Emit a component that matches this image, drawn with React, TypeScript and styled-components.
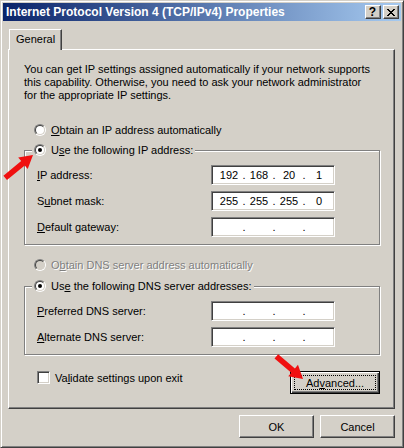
import React from "react";
import styled, { createGlobalStyle, css } from "styled-components";

const GlobalStyle = createGlobalStyle`
  html, body {
    margin: 0;
    padding: 0;
    background: #d4d0c8;
  }
  body {
    font-family: "Liberation Sans", Arial, sans-serif;
    font-size: 11px;
    color: #000;
  }
`;

const Screen = styled.div`
  position: relative;
  width: 404px;
  height: 448px;
`;

const Window = styled.div`
  width: 404px;
  height: 448px;
  box-sizing: border-box;
  border: 1px solid;
  border-color: #d4d0c8 #404040 #404040 #d4d0c8;
  box-shadow: inset 1px 1px 0 #fff, inset -1px -1px 0 #808080;
  padding: 2px;
  background: #d4d0c8;
  display: flex;
  flex-direction: column;
`;

const TitleBar = styled.div`
  height: 18px;
  flex: none;
  display: flex;
  align-items: center;
  padding: 0 2px 0 3px;
  background: linear-gradient(90deg, #0a246a 0%, #a6caf0 100%);
`;

const Title = styled.div`
  flex: 1;
  color: #fff;
  font-weight: bold;
  font-size: 12px;
  white-space: nowrap;
`;

const CaptionButtons = styled.div`
  display: flex;
  gap: 2px;
`;

const CaptionButton = styled.div`
  width: 16px;
  height: 14px;
  box-sizing: border-box;
  background: #d4d0c8;
  border: 1px solid;
  border-color: #fff #404040 #404040 #fff;
  box-shadow: inset -1px -1px 0 #808080;
  display: flex;
  align-items: center;
  justify-content: center;
`;

const HelpGlyph = styled.span`
  font-weight: bold;
  font-size: 12px;
  line-height: 12px;
  margin: 0 1px 1px 0;
`;

const Body = styled.div`
  flex: 1;
  display: flex;
  flex-direction: column;
  padding: 8px 6px 0 5px;
`;

const TabStrip = styled.div`
  display: flex;
  padding-left: 1px;
`;

const Tab = styled.div`
  position: relative;
  z-index: 1;
  width: 53px;
  height: 21px;
  margin-bottom: -1px;
  box-sizing: border-box;
  padding-left: 6px;
  line-height: 18px;
  background: #d4d0c8;
  border-top: 1px solid #fff;
  border-left: 1px solid #fff;
  border-right: 1px solid #404040;
  box-shadow: inset -1px 0 0 #808080;
`;

const Panel = styled.div`
  height: 360px;
  box-sizing: border-box;
  border: 1px solid;
  border-color: #fff #404040 #404040 #fff;
  box-shadow: inset -1px -1px 0 #808080;
  padding: 13px 14px 0 15px;
  display: flex;
  flex-direction: column;
`;

const Intro = styled.p`
  margin: 0;
  line-height: 13px;
  white-space: nowrap;
`;

const Key = styled.span`
  text-decoration: underline;
  text-underline-offset: 1px;
`;

const OptionRow = styled.div<{ $mt: number; $disabled?: boolean }>`
  display: flex;
  align-items: center;
  gap: 5px;
  height: 16px;
  margin-top: ${(p) => p.$mt}px;
  padding-left: 10px;
  ${(p) =>
    p.$disabled &&
    css`
      color: #808080;
      text-shadow: 1px 1px 0 #fff;
    `}
`;

const RadioOuter = styled.span`
  flex: none;
  width: 12px;
  height: 12px;
  box-sizing: border-box;
  border-radius: 50%;
  border: 1px solid;
  border-color: #808080 #fff #fff #808080;
  display: flex;
`;

const RadioInner = styled.span<{ $disabled?: boolean }>`
  flex: 1;
  border-radius: 50%;
  border: 1px solid;
  border-color: #404040 #d4d0c8 #d4d0c8 #404040;
  background: ${(p) => (p.$disabled ? "#d4d0c8" : "#fff")};
  display: flex;
  align-items: center;
  justify-content: center;
`;

const RadioDot = styled.span`
  width: 4px;
  height: 4px;
  border-radius: 50%;
  background: #000;
`;

const Radio = ({ checked, disabled }: { checked?: boolean; disabled?: boolean }) => (
  <RadioOuter>
    <RadioInner $disabled={disabled}>{checked && <RadioDot />}</RadioInner>
  </RadioOuter>
);

const GroupBox = styled.div<{ $mt: number }>`
  margin-top: ${(p) => p.$mt}px;
  width: 356px;
  box-sizing: border-box;
  border: 1px solid #808080;
  box-shadow: inset 1px 1px 0 #fff, 1px 1px 0 #fff;
  padding-bottom: 7px;
  display: flex;
  flex-direction: column;
`;

const Legend = styled.div`
  align-self: flex-start;
  display: flex;
  align-items: center;
  gap: 5px;
  height: 16px;
  margin: -9px 0 7px 7px;
  padding: 0 2px;
  background: #d4d0c8;
`;

const FieldRow = styled.div`
  display: flex;
  align-items: center;
  height: 20px;
  padding-left: 12px;

  & + & {
    margin-top: 6px;
  }
`;

const FieldLabel = styled.div`
  width: 174px;
`;

const IpBox = styled.div`
  width: 124px;
  height: 20px;
  box-sizing: border-box;
  border: 1px solid;
  border-color: #808080 #fff #fff #808080;
  box-shadow: inset 1px 1px 0 #404040, inset -1px -1px 0 #d4d0c8;
  background: #fff;
  padding-left: 4px;
  display: grid;
  grid-template-columns: 26px 4px 26px 4px 26px 4px 26px;
  align-items: center;
`;

const Octet = styled.span`
  text-align: center;
`;

const Dot = styled.span`
  display: flex;
  justify-content: center;
`;

const IpField = ({ value }: { value?: string[] }) => {
  const parts = value ?? ["", "", "", ""];
  return (
    <IpBox>
      {parts.map((v, i) => (
        <React.Fragment key={i}>
          {i > 0 && <Dot>.</Dot>}
          <Octet>{v}</Octet>
        </React.Fragment>
      ))}
    </IpBox>
  );
};

const BottomRow = styled.div`
  margin-top: 16px;
  display: flex;
  align-items: flex-start;
  justify-content: space-between;
  width: 356px;
`;

const CheckRow = styled.label`
  display: flex;
  align-items: center;
  gap: 5px;
  height: 13px;
  padding-left: 13px;
`;

const CheckBox = styled.span`
  width: 13px;
  height: 13px;
  box-sizing: border-box;
  border: 1px solid;
  border-color: #808080 #fff #fff #808080;
  box-shadow: inset 1px 1px 0 #404040, inset -1px -1px 0 #d4d0c8;
  background: #fff;
`;

const Button = styled.button<{ $w?: number; $default?: boolean }>`
  width: ${(p) => p.$w ?? 75}px;
  height: 23px;
  box-sizing: border-box;
  padding: 0;
  font: inherit;
  color: #000;
  background: #d4d0c8;
  border: 1px solid;
  border-color: #fff #404040 #404040 #fff;
  box-shadow: inset -1px -1px 0 #808080;
  display: flex;
  align-items: center;
  justify-content: center;

  ${(p) =>
    p.$default &&
    css`
      border-color: #000;
      box-shadow: inset 1px 1px 0 #fff, inset -1px -1px 0 #404040,
        inset -2px -2px 0 #808080;
      padding: 3px;
    `}
`;

const FocusRing = styled.span`
  flex: 1;
  align-self: stretch;
  border: 1px dotted #000;
  display: flex;
  align-items: center;
  justify-content: center;
`;

const Footer = styled.div`
  display: flex;
  justify-content: flex-end;
  gap: 6px;
  margin-top: 6px;
`;

const Overlay = styled.svg`
  position: absolute;
  left: 0;
  top: 0;
  pointer-events: none;
`;

const Arrow = ({ x, y, angle, len }: { x: number; y: number; angle: number; len: number }) => (
  <polygon
    points={`0,0 -13,-7.5 -13,-2.8 ${-len},-2.8 ${-len},2.8 -13,2.8 -13,7.5`}
    transform={`translate(${x} ${y}) rotate(${angle})`}
    fill="#f01010"
  />
);

export default function App() {
  return (
    <>
      <GlobalStyle />
      <Screen>
        <Window>
          <TitleBar>
            <Title>Internet Protocol Version 4 (TCP/IPv4) Properties</Title>
            <CaptionButtons>
              <CaptionButton>
                <HelpGlyph>?</HelpGlyph>
              </CaptionButton>
              <CaptionButton>
                <svg width="8" height="7" viewBox="0 0 8 7" shapeRendering="crispEdges">
                  <path
                    d="M0 0h2v1H0zM6 0h2v1H6zM1 1h2v1H1zM5 1h2v1H5zM2 2h4v1H2zM3 3h2v1H3zM2 4h4v1H2zM1 5h2v1H1zM5 5h2v1H5zM0 6h2v1H0zM6 6h2v1H6z"
                    fill="#000"
                  />
                </svg>
              </CaptionButton>
            </CaptionButtons>
          </TitleBar>

          <Body>
            <TabStrip>
              <Tab>General</Tab>
            </TabStrip>
            <Panel>
              <Intro>
                You can get IP settings assigned automatically if your network supports
                <br />
                this capability. Otherwise, you need to ask your network administrator
                <br />
                for the appropriate IP settings.
              </Intro>

              <OptionRow $mt={20}>
                <Radio />
                <span>
                  <Key>O</Key>btain an IP address automatically
                </span>
              </OptionRow>

              <GroupBox $mt={12}>
                <Legend>
                  <Radio checked />
                  <span>
                    U<Key>s</Key>e the following IP address:
                  </span>
                </Legend>
                <FieldRow>
                  <FieldLabel>
                    <Key>I</Key>P address:
                  </FieldLabel>
                  <IpField value={["192", "168", "20", "1"]} />
                </FieldRow>
                <FieldRow>
                  <FieldLabel>
                    S<Key>u</Key>bnet mask:
                  </FieldLabel>
                  <IpField value={["255", "255", "255", "0"]} />
                </FieldRow>
                <FieldRow>
                  <FieldLabel>
                    <Key>D</Key>efault gateway:
                  </FieldLabel>
                  <IpField />
                </FieldRow>
              </GroupBox>

              <OptionRow $mt={12} $disabled>
                <Radio disabled />
                <span>
                  O<Key>b</Key>tain DNS server address automatically
                </span>
              </OptionRow>

              <GroupBox $mt={13}>
                <Legend>
                  <Radio checked />
                  <span>
                    Us<Key>e</Key> the following DNS server addresses:
                  </span>
                </Legend>
                <FieldRow>
                  <FieldLabel>
                    <Key>P</Key>referred DNS server:
                  </FieldLabel>
                  <IpField />
                </FieldRow>
                <FieldRow>
                  <FieldLabel>
                    <Key>A</Key>lternate DNS server:
                  </FieldLabel>
                  <IpField />
                </FieldRow>
              </GroupBox>

              <BottomRow>
                <CheckRow>
                  <CheckBox />
                  <span>
                    Va<Key>l</Key>idate settings upon exit
                  </span>
                </CheckRow>
                <Button $w={90} $default>
                  <FocusRing>
                    Ad<Key>v</Key>anced...
                  </FocusRing>
                </Button>
              </BottomRow>
            </Panel>

            <Footer>
              <Button>OK</Button>
              <Button>Cancel</Button>
            </Footer>
          </Body>
        </Window>

        <Overlay width="404" height="448" viewBox="0 0 404 448">
          <Arrow x={33} y={155} angle={-39.4} len={36} />
          <Arrow x={303} y={379} angle={40.4} len={35} />
        </Overlay>
      </Screen>
    </>
  );
}
